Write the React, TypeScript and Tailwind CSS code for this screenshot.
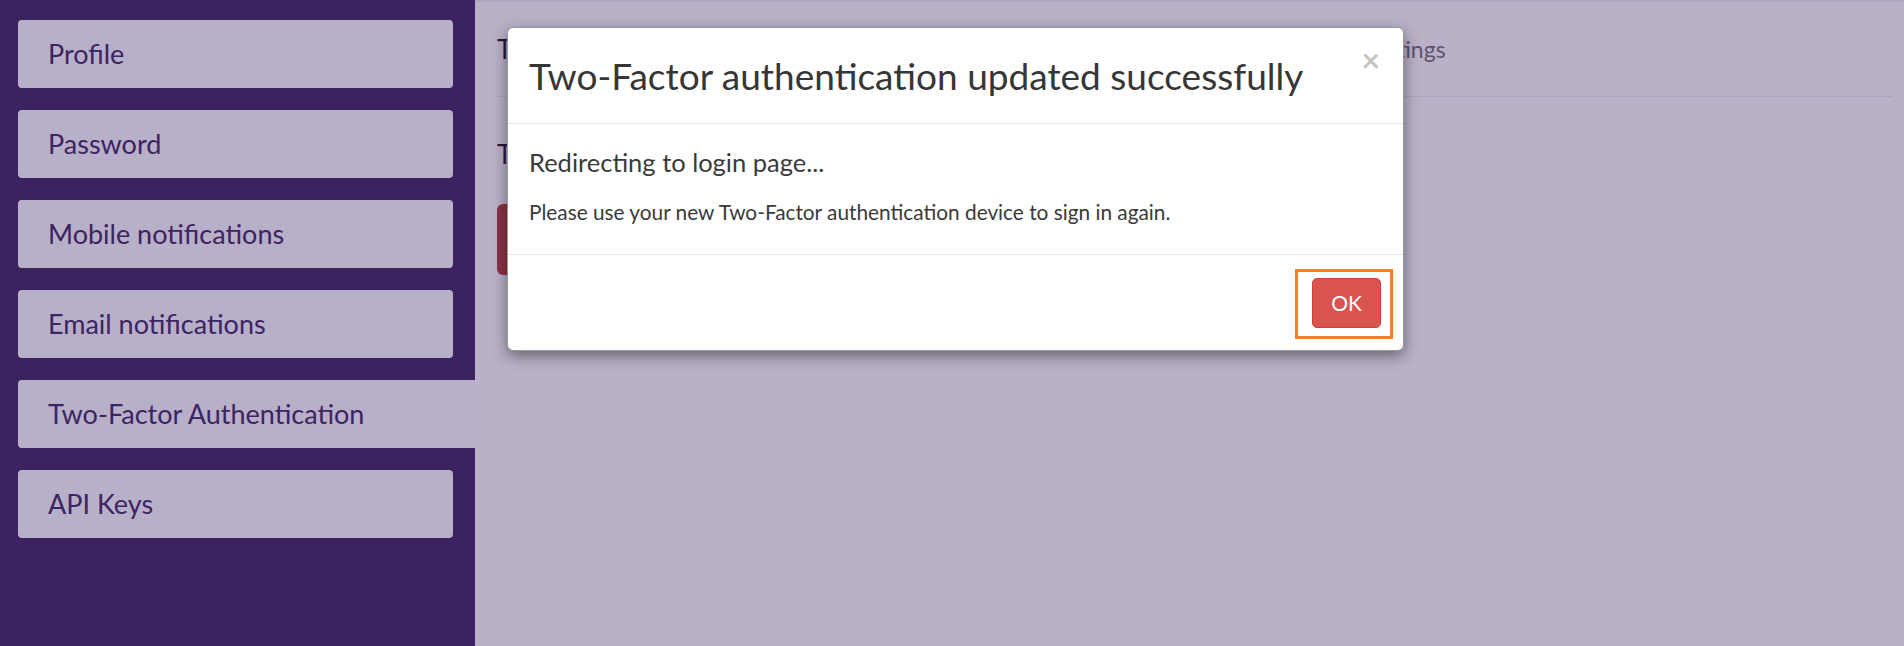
import React from "react";

const items = [
  "Profile",
  "Password",
  "Mobile notifications",
  "Email notifications",
  "Two-Factor Authentication",
  "API Keys",
];

export default function App() {
  const active = "Two-Factor Authentication";

  return (
    <div className="relative flex h-[646px] w-full overflow-hidden bg-[#bab1c8] font-['Lato','Noto_Sans',sans-serif]">
      {/* Sidebar */}
      <aside className="flex w-[475px] shrink-0 flex-col gap-[22px] bg-[#3b2360] pl-[18px] pt-[20px]">
        {items.map((label) => (
          <div
            key={label}
            className={
              label === active
                ? "flex h-[68px] w-[457px] items-center rounded-l-[4px] bg-[#b8afc8] pl-[30px] text-[27px] text-[#3d2462]"
                : "flex h-[68px] w-[435px] items-center rounded-[4px] bg-[#b8afc8] pl-[30px] text-[27px] text-[#3d2462]"
            }
          >
            {label}
          </div>
        ))}
      </aside>

      {/* Page content, dimmed under the modal */}
      <main className="flex-1 border-t-2 border-[#aea4be] pl-[22px] pr-[11px]">
        <div className="flex h-[95px] items-center border-b border-[#aca2bc]">
          <div className="w-[868px] text-[26px] text-[#2b1c3b]">Two-Factor Authentication</div>
          <div className="text-[23px] text-[#5e5370]">Settings</div>
        </div>
        <div className="mt-[38px] text-[26px] text-[#2b1c3b]">Two-Factor Authentication</div>
        <div className="mt-[30px] flex h-[71px] w-[220px] items-center rounded-[6px] bg-[#8c3347] px-5 text-[20px] text-[#b9a9bb]">
          Disable
        </div>
      </main>

      {/* Modal */}
      <div className="absolute left-[507px] top-[27px] w-[897px] rounded-[6px] border border-black/40 bg-white shadow-[0_5px_15px_rgba(0,0,0,0.45)]">
        <div className="relative flex h-[96px] items-center border-b border-[#e5e5e5] px-[21px]">
          <h4 className="text-[37px] text-[#363636]">Two-Factor authentication updated successfully</h4>
          <span className="absolute right-[23px] top-[16px] text-[32px] font-bold leading-none text-[#c4c4c4]">×</span>
        </div>
        <div className="h-[130px] px-[21px] pt-[23px]">
          <p className="text-[25.5px] leading-[30px] text-[#3a3a3a]">Redirecting to login page...</p>
          <p className="mt-[22px] text-[20.8px] leading-[26px] text-[#3a3a3a]">
            Please use your new Two-Factor authentication device to sign in again.
          </p>
        </div>
        <div className="flex h-[96px] items-center justify-end border-t border-[#e5e5e5] pr-[22px]">
          <div className="relative">
            <button className="h-[50px] w-[69px] rounded-[5px] border border-[#d43f3a] bg-[#d9534f] text-[21px] text-white">
              OK
            </button>
            <span className="absolute -bottom-[11px] -left-[17px] -right-[12px] -top-[9px] border-[3px] border-[#fd7f23]" />
          </div>
        </div>
      </div>
    </div>
  );
}
